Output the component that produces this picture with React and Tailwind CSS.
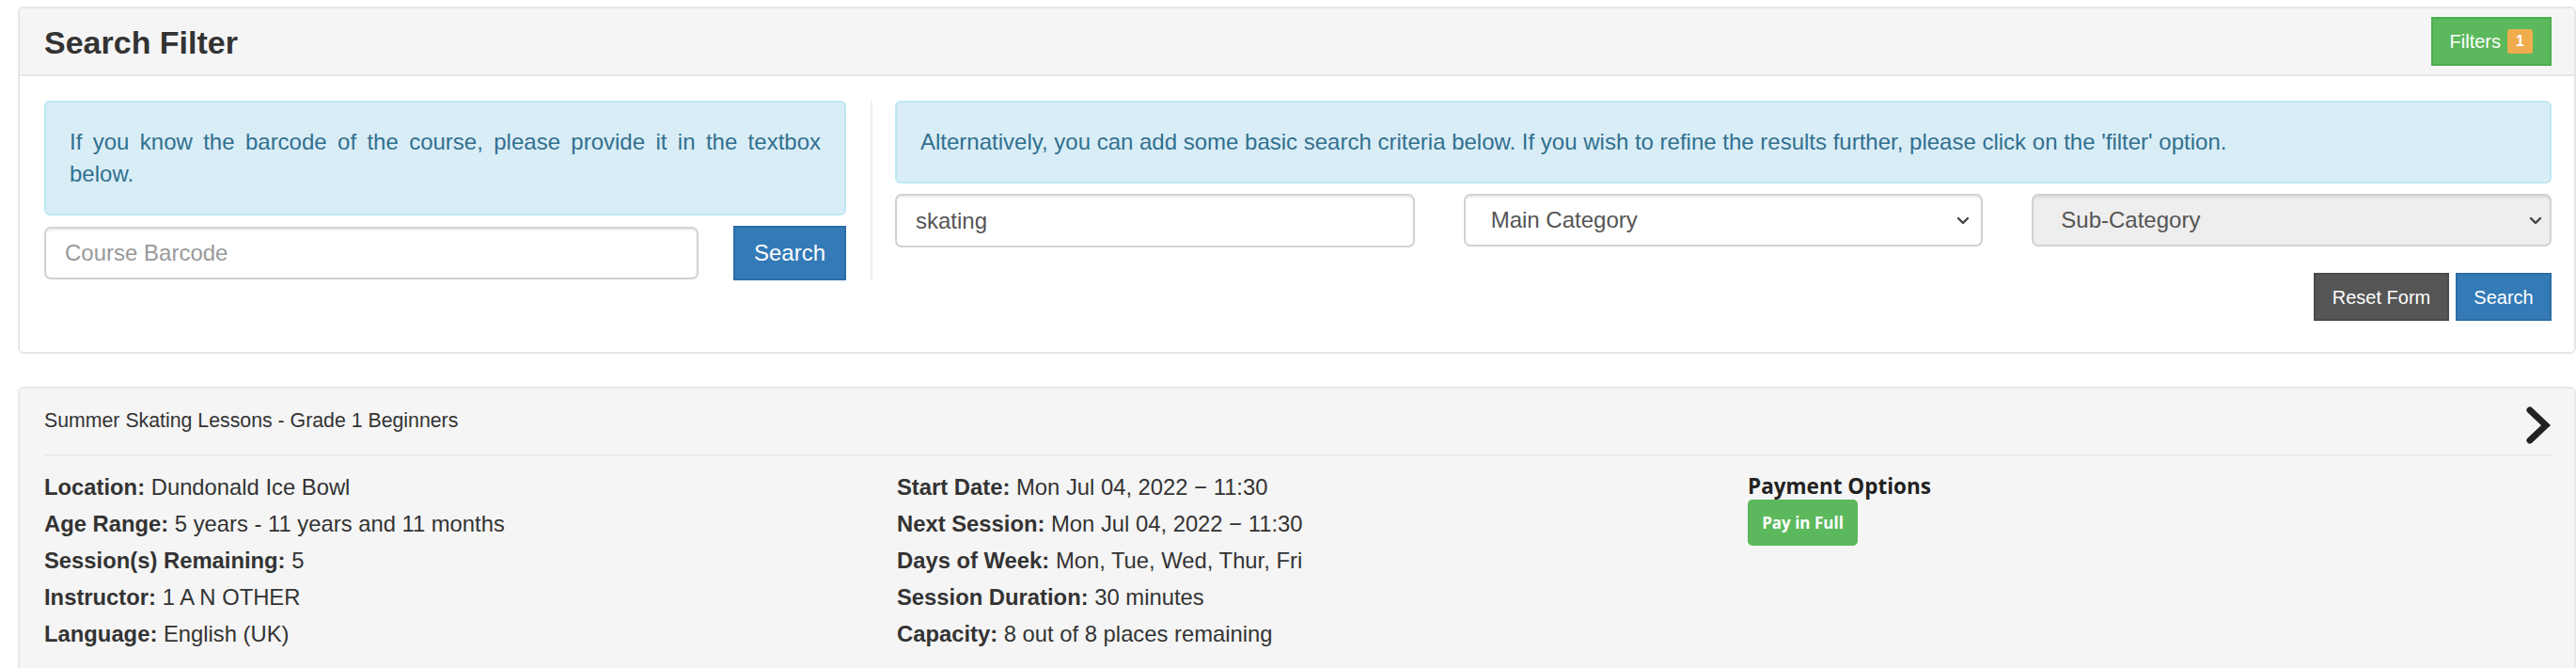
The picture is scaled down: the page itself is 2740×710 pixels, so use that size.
import React from "react";

function Chevron({ className }) {
  return (
    <svg className={className} width="14" height="10" viewBox="0 0 14 10" fill="none">
      <polyline points="2,2 7,7 12,2" stroke="#444" strokeWidth="2.4" strokeLinecap="round" strokeLinejoin="round" />
    </svg>
  );
}

function Field({ label, value }) {
  return (
    <div>
      <span className="font-bold">{label}:</span> {value}
    </div>
  );
}

export default function App() {
  return (
    <div className="w-[2740px] h-[710px] overflow-hidden bg-white pt-[7px] font-['Liberation_Sans',Arial,sans-serif] text-[#333]">
      {/* Search Filter panel */}
      <div className="ml-[19px] border-2 border-[#e6e6e6] rounded-[6px] bg-white">
        <div className="h-[72px] bg-[#f5f5f5] border-b-2 border-[#e6e6e6] flex items-center justify-between pl-[26px] pr-[24px] rounded-t-[5px]">
          <h3 className="text-[34px] font-bold leading-none pt-[1px]">Search Filter</h3>
          <button className="h-[52px] bg-[#5cb85c] text-white text-[20px] flex items-center px-[18px] border-2 border-[#4cae4c]">
            <span>Filters</span>
            <span className="ml-[7px] w-[27px] h-[26px] bg-[#f0ad4e] rounded-[3px] text-[16px] font-bold flex items-center justify-center">1</span>
          </button>
        </div>
        <div className="flex items-start pt-[26px] pb-[33px] pl-[26px] pr-[24px]">
          {/* left column */}
          <div className="w-[853px]">
            <div className="border-2 border-[#bce8f1] bg-[#d9edf7] rounded-[6px] px-[25px] py-[25px] text-[#31708f] text-[24px] leading-[34px] text-justify">
              If you know the barcode of the course, please provide it in the textbox below.
            </div>
            <div className="mt-[11px] flex items-center justify-between">
              <input
                placeholder="Course Barcode"
                className="w-[696px] h-[56px] border-2 border-[#d2d2d2] rounded-[7px] px-[20px] text-[24px] text-[#555] placeholder:text-[#999] bg-white shadow-[inset_0_2px_2px_rgba(0,0,0,0.075)] outline-none"
              />
              <button className="w-[120px] h-[58px] bg-[#337ab7] border-2 border-[#2e6da4] text-white text-[24px]">Search</button>
            </div>
          </div>
          <div className="ml-[26px] w-[2px] h-[191px] bg-[#eeeeee]" />
          {/* right column */}
          <div className="ml-[24px] flex-1">
            <div className="border-2 border-[#bce8f1] bg-[#d9edf7] rounded-[6px] px-[25px] py-[25px] text-[#31708f] text-[24px] leading-[34px]">
              Alternatively, you can add some basic search criteria below. If you wish to refine the results further, please click on the 'filter' option.
            </div>
            <div className="mt-[11px] grid grid-cols-3 gap-x-[52px]">
              <input
                defaultValue="skating"
                className="h-[57px] border-2 border-[#d2d2d2] rounded-[7px] px-[20px] text-[24px] text-[#555] bg-white shadow-[inset_0_2px_2px_rgba(0,0,0,0.075)] outline-none"
              />
              <div className="relative">
                <select className="appearance-none w-full h-[56px] border-2 border-[#d2d2d2] rounded-[7px] pl-[27px] text-[24px] text-[#555] bg-white shadow-[inset_0_2px_2px_rgba(0,0,0,0.075)] outline-none">
                  <option>Main Category</option>
                </select>
                <Chevron className="absolute right-[14px] top-[24px] pointer-events-none" />
              </div>
              <div className="relative">
                <select disabled className="appearance-none w-full h-[56px] border-2 border-[#d2d2d2] rounded-[7px] pl-[29px] text-[24px] text-[#555] bg-[#eeeeee] shadow-[inset_0_2px_2px_rgba(0,0,0,0.075)] outline-none">
                  <option>Sub-Category</option>
                </select>
                <Chevron className="absolute right-[10px] top-[24px] pointer-events-none" />
              </div>
            </div>
            <div className="mt-[27px] flex justify-end gap-[7px]">
              <button className="w-[144px] h-[51px] bg-[#555555] border-2 border-[#4a4a4a] text-white text-[20px]">Reset Form</button>
              <button className="w-[102px] h-[51px] bg-[#337ab7] border-2 border-[#2e6da4] text-white text-[20px]">Search</button>
            </div>
          </div>
        </div>
      </div>

      {/* Course result panel */}
      <div className="mt-[35px] ml-[19px] h-[300px] border-2 border-b-0 border-[#e8e8e8] rounded-t-[6px] bg-[#f5f5f5] pl-[26px] pr-[24px]">
        <div className="h-[70px] flex items-center justify-between">
          <div className="text-[21.3px] leading-none">Summer Skating Lessons - Grade 1 Beginners</div>
          <svg className="mt-[8px] mr-[1px]" width="27" height="42" viewBox="0 0 27 42" fill="none">
            <polyline points="5,5 22,21 5,37" stroke="#222" strokeWidth="7" strokeLinecap="round" strokeLinejoin="miter" />
          </svg>
        </div>
        <div className="h-[2px] bg-[#ebebeb]" />
        <div className="pt-[13px] flex text-[23.8px] leading-[39px]">
          <div className="w-[907px]">
            <Field label="Location" value="Dundonald Ice Bowl" />
            <Field label="Age Range" value="5 years - 11 years and 11 months" />
            <Field label="Session(s) Remaining" value="5" />
            <Field label="Instructor" value="1 A N OTHER" />
            <Field label="Language" value="English (UK)" />
          </div>
          <div className="w-[905px]">
            <Field label="Start Date" value="Mon Jul 04, 2022 − 11:30" />
            <Field label="Next Session" value="Mon Jul 04, 2022 − 11:30" />
            <Field label="Days of Week" value="Mon, Tue, Wed, Thur, Fri" />
            <Field label="Session Duration" value="30 minutes" />
            <Field label="Capacity" value="8 out of 8 places remaining" />
          </div>
          <div className="flex-1 font-['Open_Sans',sans-serif]">
            <div className="pt-[4px] leading-[29px] text-[22.5px] font-bold text-[#222]">Payment Options</div>
            <div className="w-[117px] h-[49px] rounded-[5px] bg-[#5cb85c] text-white font-bold text-[17px] flex items-center justify-center leading-none">Pay in Full</div>
          </div>
        </div>
      </div>
    </div>
  );
}
